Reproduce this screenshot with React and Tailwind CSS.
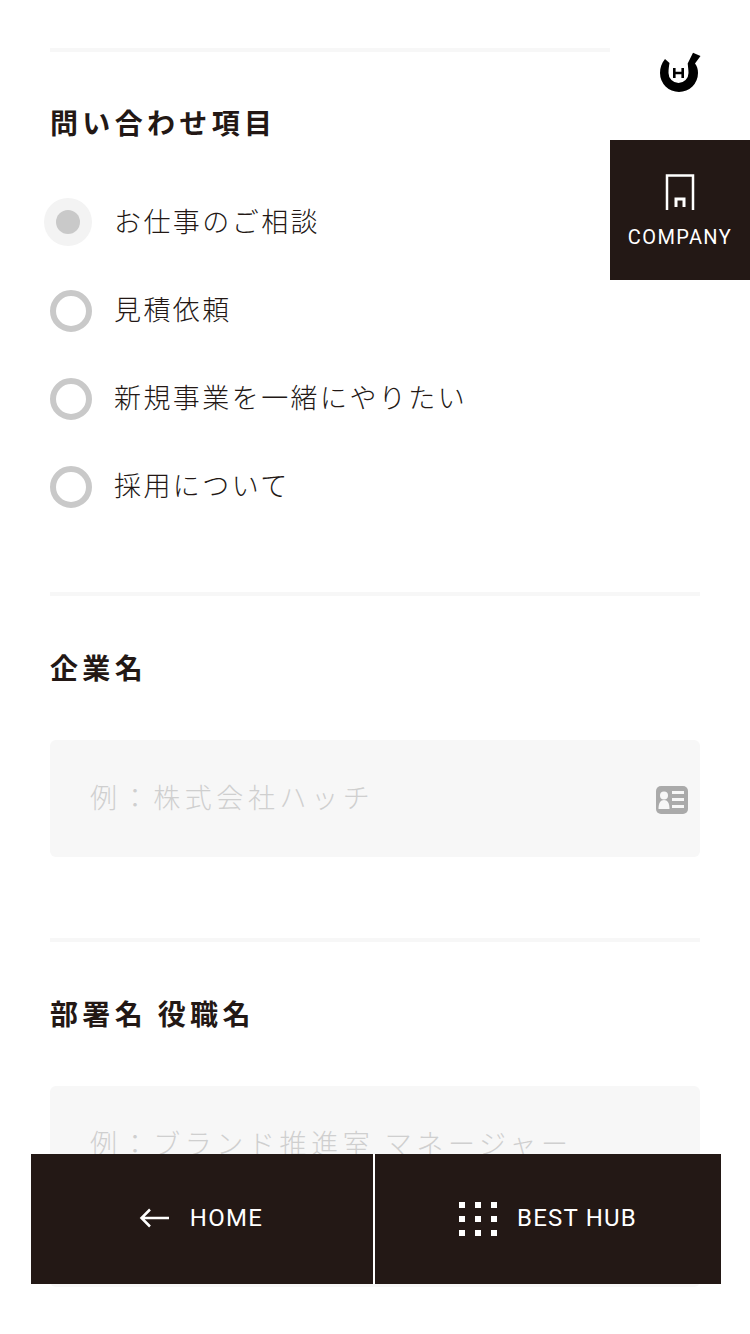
const sans = { fontFamily: '"Noto Sans CJK JP", "Noto Sans", sans-serif' };

const options = ["お仕事のご相談", "見積依頼", "新規事業を一緒にやりたい", "採用について"];

const CardIcon = () => (
  <svg width="32" height="28" viewBox="0 0 32 28" className="absolute right-[12px] top-[46px]">
    <rect width="32" height="28" rx="5" fill="#aaaaaa" />
    <circle cx="8" cy="9.500" r="4" fill="#f7f7f7" />
    <path d="M2.500 23c0-6 2-9 5.500-9s5.500 3 5.500 9z" fill="#f7f7f7" />
    <path d="M16 5h12v3H16zM16 12h12v3H16zM16 19h12v3H16z" fill="#f7f7f7" />
  </svg>
);

const Field = ({ label, placeholder, icon, tall }) => (
  <section className="border-t-4 border-[#f7f7f7]">
    <h2 className="mt-[51px] text-[28px] leading-[40px] font-bold tracking-[0.155em] text-[#231815]">{label}</h2>
    <div className={`relative mt-[53px] rounded-[6px] bg-[#f7f7f7] pl-[40px] pt-[37px] text-[27px] leading-[40px] font-light tracking-[0.17em] text-[#cfcfcf] ${tall ? "h-[201px]" : "h-[117px]"}`}>
      {placeholder}
      {icon && <CardIcon />}
    </div>
  </section>
);

export default function App() {
  return (
    <div className="relative h-[1334px] w-[750px] overflow-hidden bg-white" style={sans}>
      <main className="px-[50px] pt-[48px]">
        <section className="border-t-4 border-[#f7f7f7] pb-[84px]">
          <h2 className="mt-[50px] text-[28px] leading-[40px] font-bold tracking-[0.155em] text-[#231815]">問い合わせ項目</h2>
          <ul className="mt-[60px] flex flex-col gap-[46px]">
            {options.map((o, i) => (
              <li key={o} className="flex h-[42px] items-center gap-[22px]">
                {i === 0 ? (
                  <span className="-mt-[2px] -ml-[6px] flex h-[48px] w-[48px] shrink-0 items-center justify-center rounded-full bg-[#f3f3f3]">
                    <span className="h-[24px] w-[24px] rounded-full bg-[#c9c9c9]" />
                  </span>
                ) : (
                  <span className="h-[42px] w-[42px] shrink-0 rounded-full border-[6px] border-[#c9c9c9]" />
                )}
                <span className="-mt-[4px] text-[27px] leading-[40px] font-light tracking-[0.09em] text-[#231815]">{o}</span>
              </li>
            ))}
          </ul>
        </section>
        <Field label="企業名" placeholder="例：株式会社ハッチ" icon />
        <div className="h-[81px]" />
        <Field label="部署名 役職名" placeholder="例：ブランド推進室 マネージャー" tall />
      </main>

      {/* right side fixed */}
      <div className="absolute right-0 top-0 w-[140px]">
        <div className="flex h-[140px] items-start justify-center bg-white pt-[40px]">
          <svg width="60" height="60" viewBox="650 40 60 60">
            <path
              d="M665 59C661.500 63 660 68 660 73A19 19 0 0 0 698 73C698 69 697 66 695 63.500L700.500 56 693 52.700 687.700 63.500C688 67 688.500 70 688.500 73A10 10 0 0 1 668.500 73C668.500 69 669 66 669.500 63Z"
              fill="#000"
            />
            <path d="M674.300 68v10M682.700 68v10M674.300 73h8.400" fill="none" stroke="#000" strokeWidth="2.600" />
          </svg>
        </div>
        <div className="flex h-[140px] flex-col items-center bg-[#231815] pt-[34px] text-white">
          <svg width="30" height="36" viewBox="0 0 30 36" fill="none" stroke="#fff" strokeWidth="2.500">
            <path d="M2 36V1.500h26V36" />
            <path d="M11 33v-8h8v8" strokeWidth="3" />
          </svg>
          <span className="mt-[13px] text-[20px] leading-[28px] tracking-[0.07em]" style={{ fontFamily: "Roboto, sans-serif" }}>COMPANY</span>
        </div>
      </div>

      {/* bottom nav */}
      <nav className="absolute left-[31px] top-[1154px] flex h-[130px] w-[690px] gap-[2px] bg-white text-white" style={{ fontFamily: "Roboto, sans-serif" }}>
        <a className="flex w-[342px] items-center justify-center gap-[21px] bg-[#231815] pb-[2px] pr-[2px] text-[24px] tracking-[0.055em]">
          <svg width="30" height="20" viewBox="0 0 30 20" fill="none" stroke="#fff" strokeWidth="2.500">
            <path d="M30 10H3M11 1.500 2.500 10l8.500 8.500" />
          </svg>
          HOME
        </a>
        <a className="flex flex-1 items-center justify-center gap-[20px] bg-[#231815] pb-[2px] text-[24px] tracking-[0.05em]">
          <span className="mt-[2px] grid grid-cols-3 gap-x-[10px] gap-y-[8px]">
            {Array.from({ length: 9 }).map((_, i) => (
              <i key={i} className="block h-[6px] w-[6px] bg-white" />
            ))}
          </span>
          BEST HUB
        </a>
      </nav>
    </div>
  );
}
